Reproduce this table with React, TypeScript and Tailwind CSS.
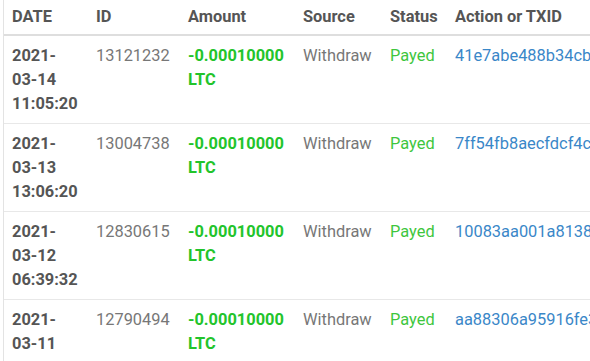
import React from "react";

const rows = [
  { d: "2021-", m: "03-14", t: "11:05:20", id: "13121232", tx: "41e7abe488b34cb7a9e2f01d" },
  { d: "2021-", m: "03-13", t: "13:06:20", id: "13004738", tx: "7ff54fb8aecfdcf4c81e29a0" },
  { d: "2021-", m: "03-12", t: "06:39:32", id: "12830615", tx: "10083aa001a8138f6e0d4c2b" },
  { d: "2021-", m: "03-11", t: "09:40:17", id: "12790494", tx: "aa88306a95916fe3b7c0d851" },
];

const cols = "grid-cols-[84px_92px_115px_87px_65px_300px]";

export default function App() {
  return (
    <div className="w-[590px] h-[361px] overflow-hidden bg-white" style={{ fontFamily: "Roboto, 'Liberation Sans', sans-serif" }}>
      <div className="ml-[3px] border-l border-[#e3e3e3] w-[760px] text-[16.4px] leading-[24px]">
        <div className={`grid ${cols} border-b-2 border-[#dedede] h-[36px] items-center font-bold text-[#555555]`}>
          <div className="pl-2">DATE</div>
          <div className="pl-2">ID</div>
          <div className="pl-2">Amount</div>
          <div className="pl-2">Source</div>
          <div className="pl-2">Status</div>
          <div className="pl-2">Action or TXID</div>
        </div>
        {rows.map((r) => (
          <div key={r.id} className={`grid ${cols} border-b border-[#e8e8e8] pt-2 pb-[7px]`}>
            <div className="pl-2 font-bold text-[#555555]">
              <div>{r.d}</div>
              <div>{r.m}</div>
              <div>{r.t}</div>
            </div>
            <div className="pl-2 text-[#777777]">{r.id}</div>
            <div className="pl-2 font-bold text-[#22c42b]">
              <div>-0.00010000</div>
              <div>LTC</div>
            </div>
            <div className="pl-2 text-[#777777]">Withdraw</div>
            <div className="pl-2 text-[#3ec63e]">Payed</div>
            <div className="pl-2 text-[#3a87c8] whitespace-nowrap">{r.tx}</div>
          </div>
        ))}
      </div>
    </div>
  );
}
